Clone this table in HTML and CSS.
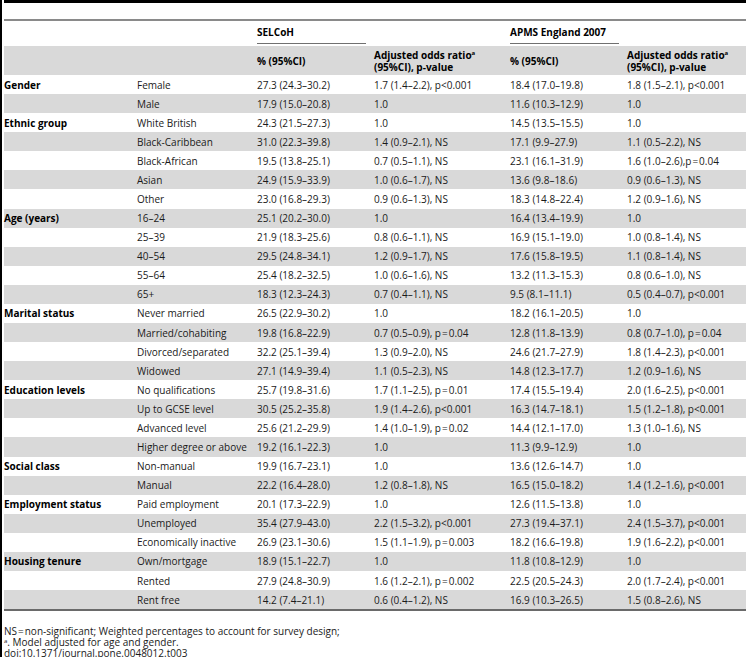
FILE: index.html
```html
<!DOCTYPE html>
<html lang="en">
<head>
    <meta charset="UTF-8">
    <title>Table 3</title>
    <link rel="stylesheet" href="styles.css">
</head>
<body>
    <div class="page">
        <div class="topbar"></div>
        <table class="data">
            <colgroup>
                <col class="c1"><col class="c2"><col class="c3"><col class="c4"><col class="c5"><col class="c6">
            </colgroup>
            <thead>
                <tr class="head-top">
                    <th></th>
                    <th></th>
                    <th colspan="2"><div class="group">SELCoH</div></th>
                    <th colspan="2"><div class="group">APMS England 2007</div></th>
                </tr>
                <tr class="head-sub">
                    <th></th>
                    <th></th>
                    <th>% (95%CI)</th>
                    <th>Adjusted odds ratio<sup>a</sup><br>(95%CI), p-value</th>
                    <th>% (95%CI)</th>
                    <th>Adjusted odds ratio<sup>a</sup><br>(95%CI), p-value</th>
                </tr>
            </thead>
            <tbody>
                <tr><td class="lbl">Gender</td><td>Female</td><td>27.3 (24.3–30.2)</td><td>1.7 (1.4–2.2), p&lt;0.001</td><td>18.4 (17.0–19.8)</td><td>1.8 (1.5–2.1), p&lt;0.001</td></tr>
                <tr><td></td><td>Male</td><td>17.9 (15.0–20.8)</td><td>1.0</td><td>11.6 (10.3–12.9)</td><td>1.0</td></tr>
                <tr><td class="lbl">Ethnic group</td><td>White British</td><td>24.3 (21.5–27.3)</td><td>1.0</td><td>14.5 (13.5–15.5)</td><td>1.0</td></tr>
                <tr><td></td><td>Black-Caribbean</td><td>31.0 (22.3–39.8)</td><td>1.4 (0.9–2.1), NS</td><td>17.1 (9.9–27.9)</td><td>1.1 (0.5–2.2), NS</td></tr>
                <tr><td></td><td>Black-African</td><td>19.5 (13.8–25.1)</td><td>0.7 (0.5–1.1), NS</td><td>23.1 (16.1–31.9)</td><td>1.6 (1.0–2.6),p&#8202;=&#8202;0.04</td></tr>
                <tr><td></td><td>Asian</td><td>24.9 (15.9–33.9)</td><td>1.0 (0.6–1.7), NS</td><td>13.6 (9.8–18.6)</td><td>0.9 (0.6–1.3), NS</td></tr>
                <tr><td></td><td>Other</td><td>23.0 (16.8–29.3)</td><td>0.9 (0.6–1.3), NS</td><td>18.3 (14.8–22.4)</td><td>1.2 (0.9–1.6), NS</td></tr>
                <tr><td class="lbl">Age (years)</td><td>16–24</td><td>25.1 (20.2–30.0)</td><td>1.0</td><td>16.4 (13.4–19.9)</td><td>1.0</td></tr>
                <tr><td></td><td>25–39</td><td>21.9 (18.3–25.6)</td><td>0.8 (0.6–1.1), NS</td><td>16.9 (15.1–19.0)</td><td>1.0 (0.8–1.4), NS</td></tr>
                <tr><td></td><td>40–54</td><td>29.5 (24.8–34.1)</td><td>1.2 (0.9–1.7), NS</td><td>17.6 (15.8–19.5)</td><td>1.1 (0.8–1.4), NS</td></tr>
                <tr><td></td><td>55–64</td><td>25.4 (18.2–32.5)</td><td>1.0 (0.6–1.6), NS</td><td>13.2 (11.3–15.3)</td><td>0.8 (0.6–1.0), NS</td></tr>
                <tr><td></td><td>65+</td><td>18.3 (12.3–24.3)</td><td>0.7 (0.4–1.1), NS</td><td>9.5 (8.1–11.1)</td><td>0.5 (0.4–0.7), p&lt;0.001</td></tr>
                <tr><td class="lbl">Marital status</td><td>Never married</td><td>26.5 (22.9–30.2)</td><td>1.0</td><td>18.2 (16.1–20.5)</td><td>1.0</td></tr>
                <tr><td></td><td>Married/cohabiting</td><td>19.8 (16.8–22.9)</td><td>0.7 (0.5–0.9), p&#8202;=&#8202;0.04</td><td>12.8 (11.8–13.9)</td><td>0.8 (0.7–1.0), p&#8202;=&#8202;0.04</td></tr>
                <tr><td></td><td>Divorced/separated</td><td>32.2 (25.1–39.4)</td><td>1.3 (0.9–2.0), NS</td><td>24.6 (21.7–27.9)</td><td>1.8 (1.4–2.3), p&lt;0.001</td></tr>
                <tr><td></td><td>Widowed</td><td>27.1 (14.9–39.4)</td><td>1.1 (0.5–2.3), NS</td><td>14.8 (12.3–17.7)</td><td>1.2 (0.9–1.6), NS</td></tr>
                <tr><td class="lbl">Education levels</td><td>No qualifications</td><td>25.7 (19.8–31.6)</td><td>1.7 (1.1–2.5), p&#8202;=&#8202;0.01</td><td>17.4 (15.5–19.4)</td><td>2.0 (1.6–2.5), p&lt;0.001</td></tr>
                <tr><td></td><td>Up to GCSE level</td><td>30.5 (25.2–35.8)</td><td>1.9 (1.4–2.6), p&lt;0.001</td><td>16.3 (14.7–18.1)</td><td>1.5 (1.2–1.8), p&lt;0.001</td></tr>
                <tr><td></td><td>Advanced level</td><td>25.6 (21.2–29.9)</td><td>1.4 (1.0–1.9), p&#8202;=&#8202;0.02</td><td>14.4 (12.1–17.0)</td><td>1.3 (1.0–1.6), NS</td></tr>
                <tr><td></td><td>Higher degree or above</td><td>19.2 (16.1–22.3)</td><td>1.0</td><td>11.3 (9.9–12.9)</td><td>1.0</td></tr>
                <tr><td class="lbl">Social class</td><td>Non-manual</td><td>19.9 (16.7–23.1)</td><td>1.0</td><td>13.6 (12.6–14.7)</td><td>1.0</td></tr>
                <tr><td></td><td>Manual</td><td>22.2 (16.4–28.0)</td><td>1.2 (0.8–1.8), NS</td><td>16.5 (15.0–18.2)</td><td>1.4 (1.2–1.6), p&lt;0.001</td></tr>
                <tr><td class="lbl">Employment status</td><td>Paid employment</td><td>20.1 (17.3–22.9)</td><td>1.0</td><td>12.6 (11.5–13.8)</td><td>1.0</td></tr>
                <tr><td></td><td>Unemployed</td><td>35.4 (27.9–43.0)</td><td>2.2 (1.5–3.2), p&lt;0.001</td><td>27.3 (19.4–37.1)</td><td>2.4 (1.5–3.7), p&lt;0.001</td></tr>
                <tr><td></td><td>Economically inactive</td><td>26.9 (23.1–30.6)</td><td>1.5 (1.1–1.9), p&#8202;=&#8202;0.003</td><td>18.2 (16.6–19.8)</td><td>1.9 (1.6–2.2), p&lt;0.001</td></tr>
                <tr><td class="lbl">Housing tenure</td><td>Own/mortgage</td><td>18.9 (15.1–22.7)</td><td>1.0</td><td>11.8 (10.8–12.9)</td><td>1.0</td></tr>
                <tr><td></td><td>Rented</td><td>27.9 (24.8–30.9)</td><td>1.6 (1.2–2.1), p&#8202;=&#8202;0.002</td><td>22.5 (20.5–24.3)</td><td>2.0 (1.7–2.4), p&lt;0.001</td></tr>
                <tr><td></td><td>Rent free</td><td>14.2 (7.4–21.1)</td><td>0.6 (0.4–1.2), NS</td><td>16.9 (10.3–26.5)</td><td>1.5 (0.8–2.6), NS</td></tr>
            </tbody>
        </table>
        <div class="notes">
            <p>NS&#8202;=&#8202;non-significant; Weighted percentages to account for survey design;</p>
            <p><sup>a</sup>. Model adjusted for age and gender.</p>
            <p>doi:10.1371/journal.pone.0048012.t003</p>
        </div>
    </div>
</body>
</html>
```

FILE: styles.css
```css
body {
    margin: 0;
    background: #ffffff;
    font-family: "Open Sans", "Liberation Sans", sans-serif;
    font-size: 10px;
    color: #1a1a1a;
}

.page {
    min-height: 657px;
    border-left: 2px solid #000;
    padding-left: 2px;
    box-sizing: border-box;
}

.topbar {
    height: 3px;
    background: #000;
}

.data {
    width: 742px;
    table-layout: fixed;
    border-collapse: collapse;
    margin-top: 16px;
    border-top: 2px solid #8a8a8a;
    border-bottom: 2px solid #6a6a6a;
}

.c1 { width: 133px; }
.c2 { width: 120px; }
.c3 { width: 117px; }
.c4 { width: 136px; }
.c5 { width: 117px; }
.c6 { width: 119px; }

th {
    text-align: left;
    font-weight: bold;
    color: #000;
    padding: 0;
    line-height: 12px;
}

.head-top th {
    height: 20px;
    padding-top: 5px;
    vertical-align: top;
}

.group {
    width: 109px;
    padding-bottom: 5px;
    border-bottom: 1px solid #707070;
    white-space: nowrap;
}

.head-sub th {
    height: 24px;
    padding: 3px 0 2px;
    vertical-align: middle;
    background: #d9d9d9;
}

sup {
    font-size: 6px;
    line-height: 0;
    vertical-align: 4px;
}

td {
    height: 19.08px;
    padding: 0;
    line-height: 12px;
    vertical-align: middle;
    white-space: nowrap;
}

tbody tr:nth-child(even) td {
    background: #d9d9d9;
}

.lbl {
    font-weight: bold;
    color: #000;
}

.notes {
    margin-top: 15px;
    line-height: 11px;
}

.notes p {
    margin: 0;
}

.notes sup {
    font-size: 6px;
    vertical-align: 3px;
}
```
